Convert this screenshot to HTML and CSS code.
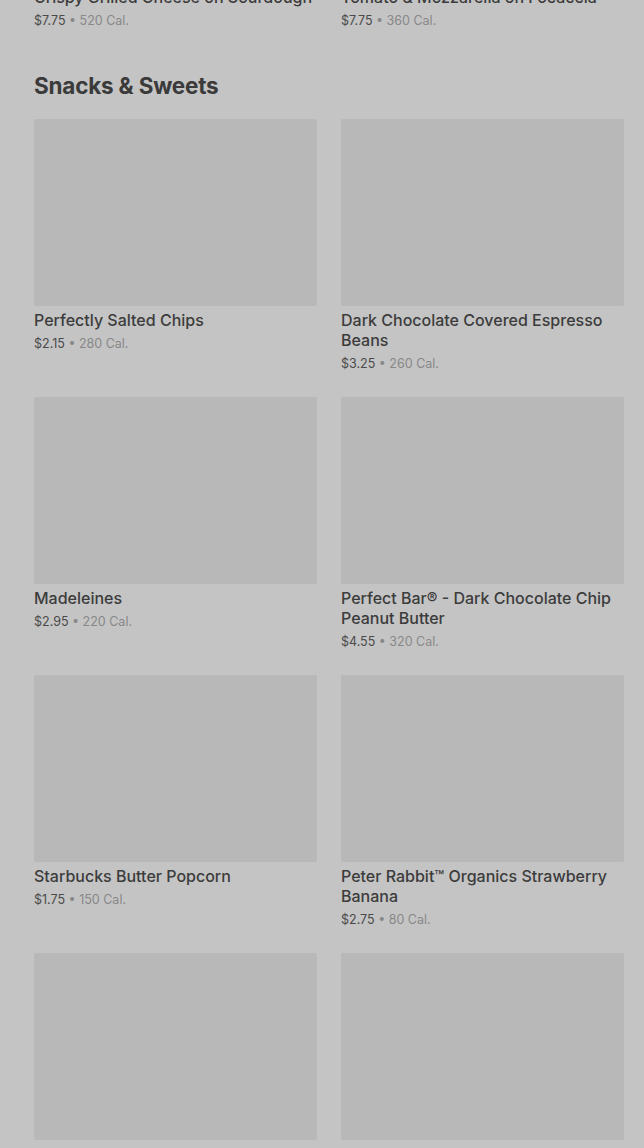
FILE: index.html
```
<!DOCTYPE html>
<html>
<head>
	<title>Menu</title>
	<meta charset="utf-8">
	<link rel="stylesheet" href="styles.css">
</head>
<body>
	<div class="menu">
		<section class="section prev">
			<div class="grid">
				<div class="card">
					<h3 class="name">Crispy Grilled Cheese on Sourdough</h3>
					<p class="meta"><span class="price">$7.75</span> &bull; 520 Cal.</p>
				</div>
				<div class="card">
					<h3 class="name">Tomato &amp; Mozzarella on Focaccia</h3>
					<p class="meta"><span class="price">$7.75</span> &bull; 360 Cal.</p>
				</div>
			</div>
		</section>

		<section class="section">
			<h2 class="heading">Snacks &amp; Sweets</h2>
			<div class="grid">
				<div class="card">
					<div class="thumb"></div>
					<h3 class="name">Perfectly Salted Chips</h3>
					<p class="meta"><span class="price">$2.15</span> &bull; 280 Cal.</p>
				</div>
				<div class="card">
					<div class="thumb"></div>
					<h3 class="name">Dark Chocolate Covered Espresso Beans</h3>
					<p class="meta"><span class="price">$3.25</span> &bull; 260 Cal.</p>
				</div>
				<div class="card">
					<div class="thumb"></div>
					<h3 class="name">Madeleines</h3>
					<p class="meta"><span class="price">$2.95</span> &bull; 220 Cal.</p>
				</div>
				<div class="card">
					<div class="thumb"></div>
					<h3 class="name">Perfect Bar&reg; - Dark Chocolate Chip Peanut Butter</h3>
					<p class="meta"><span class="price">$4.55</span> &bull; 320 Cal.</p>
				</div>
				<div class="card">
					<div class="thumb"></div>
					<h3 class="name">Starbucks Butter Popcorn</h3>
					<p class="meta"><span class="price">$1.75</span> &bull; 150 Cal.</p>
				</div>
				<div class="card">
					<div class="thumb"></div>
					<h3 class="name">Peter Rabbit&trade; Organics Strawberry Banana</h3>
					<p class="meta"><span class="price">$2.75</span> &bull; 80 Cal.</p>
				</div>
				<div class="card">
					<div class="thumb"></div>
					<h3 class="name">Hippeas&reg; White Cheddar Chickpea Puffs</h3>
					<p class="meta"><span class="price">$2.45</span> &bull; 130 Cal.</p>
				</div>
				<div class="card">
					<div class="thumb"></div>
					<h3 class="name">KIND&reg; Salted Caramel</h3>
					<p class="meta"><span class="price">$2.75</span> &bull; 200 Cal.</p>
				</div>
			</div>
		</section>
	</div>
</body>
</html>
```

FILE: styles.css
```
*{
	box-sizing: border-box;
}

html, body{
	height: 100%;
	overflow: hidden;
}

body{
	margin: 0;
	background: #c4c4c4;
	font-family: 'Inter', 'Liberation Sans', sans-serif;
	color: #3a3a3a;
}

.menu{
	padding: 0 20px 0 34px;
}

.prev{
	margin-top: -13px;
}

.heading{
	margin: 41px 0 19px;
	font-size: 22.5px;
	line-height: 28px;
	font-weight: 700;
	letter-spacing: -0.2px;
	color: #3a3a3a;
}

.grid{
	display: grid;
	grid-template-columns: 1fr 1fr;
	column-gap: 24px;
	row-gap: 23px;
}

.thumb{
	height: 187px;
	background: #b8b8b8;
	border-radius: 2px;
}

.name{
	margin: 4px 0 0;
	font-size: 16px;
	line-height: 20px;
	font-weight: 500;
	color: #3c3c3c;
}

.prev .name{
	margin-top: 0;
}

.meta{
	margin: 4px 0 0;
	font-size: 12.5px;
	line-height: 20px;
	color: #888;
}

.price{
	color: #4a4a4a;
}
```
